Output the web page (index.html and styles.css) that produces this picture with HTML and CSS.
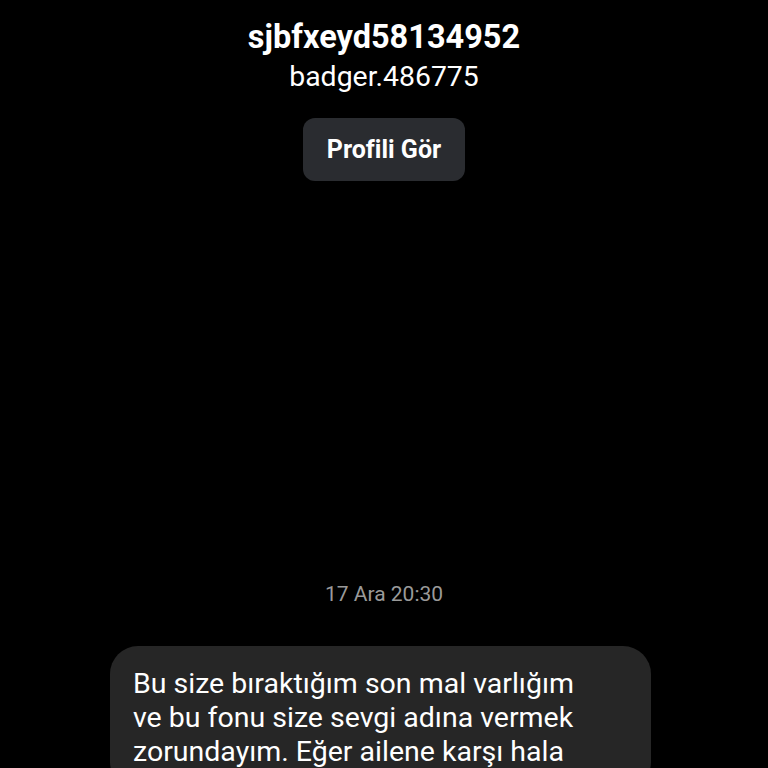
FILE: index.html
```html
<!DOCTYPE html>
<html lang="tr">
<head>
<meta charset="utf-8">
<link rel="stylesheet" href="styles.css">
</head>
<body>
<div class="page">
  <header class="profile">
    <div class="name">sjbfxeyd58134952</div>
    <div class="handle">badger.486775</div>
    <button class="btn">Profili Gör</button>
  </header>
  <div class="time">17 Ara 20:30</div>
  <div class="bubble">Bu size bıraktığım son mal varlığım ve bu fonu size sevgi adına vermek zorundayım. Eğer ailene karşı hala</div>
</div>
</body>
</html>
```

FILE: styles.css
```css
html, body {
  margin: 0;
  padding: 0;
  background: #000;
  height: 768px;
  overflow: hidden;
}
.page {
  font-family: Roboto, "Noto Sans", sans-serif;
  color: #fff;
  display: flex;
  flex-direction: column;
}
.profile {
  display: flex;
  flex-direction: column;
  align-items: center;
  padding-top: 17px;
}
.name {
  font-size: 32.5px;
  font-weight: 700;
  line-height: 40px;
}
.handle {
  font-size: 28.4px;
  line-height: 36px;
  margin-top: 2px;
}
.btn {
  margin-top: 23px;
  width: 162px;
  height: 63px;
  border: none;
  border-radius: 12px;
  background: #2a2c30;
  color: #fff;
  font-family: Roboto, "Noto Sans", sans-serif;
  font-size: 25px;
  font-weight: 700;
}
.time {
  margin-top: 400px;
  text-align: center;
  color: #9a9a9a;
  font-size: 21px;
  line-height: 26px;
}
.bubble {
  margin-top: 39px;
  margin-left: 110px;
  width: 541px;
  box-sizing: border-box;
  padding: 21px 58px 21px 23px;
  background: #262626;
  border-radius: 28px;
  font-size: 28.5px;
  line-height: 34px;
}
```
